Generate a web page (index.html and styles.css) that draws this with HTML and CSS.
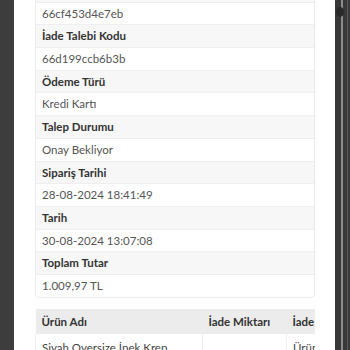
FILE: index.html
```html
<!DOCTYPE html>
<html lang="tr">
<head>
  <meta charset="UTF-8">
  <title>İade Talebi Detayı</title>
  <link rel="stylesheet" href="styles.css">
</head>
<body>

  <div class="screen">
    <div class="side-left"></div>

    <div class="modal">
      <div class="modal-body">
        <table class="detail-table">
          <tr class="label-row"><td>Sipariş Kodu</td></tr>
          <tr><td>66cf453d4e7eb</td></tr>
          <tr class="label-row"><td>İade Talebi Kodu</td></tr>
          <tr><td>66d199ccb6b3b</td></tr>
          <tr class="label-row"><td>Ödeme Türü</td></tr>
          <tr><td>Kredi Kartı</td></tr>
          <tr class="label-row"><td>Talep Durumu</td></tr>
          <tr><td>Onay Bekliyor</td></tr>
          <tr class="label-row"><td>Sipariş Tarihi</td></tr>
          <tr><td>28-08-2024 18:41:49</td></tr>
          <tr class="label-row"><td>Tarih</td></tr>
          <tr><td>30-08-2024 13:07:08</td></tr>
          <tr class="label-row"><td>Toplam Tutar</td></tr>
          <tr><td>1.009,97 TL</td></tr>
        </table>

        <div class="product-wrap">
          <table class="product-table">
            <thead>
              <tr>
                <th class="col-name">Ürün Adı</th>
                <th class="col-qty">İade Miktarı</th>
                <th class="col-reason">İade Nedeni</th>
              </tr>
            </thead>
            <tbody>
              <tr>
                <td>Siyah Oversize İpek Krep Gömlek</td>
                <td class="qty-cell">1</td>
                <td>Ürün kusurlu</td>
              </tr>
            </tbody>
          </table>
        </div>
      </div>
    </div>

    <div class="side-right">
      <span class="close-dot"></span>
      <span class="scroll-line"></span>
      <span class="edge-line"></span>
    </div>
  </div>

</body>
</html>
```

FILE: styles.css
```css
* {
  box-sizing: border-box;
  margin: 0;
  padding: 0;
}

body {
  font-family: Lato, 'Noto Sans', sans-serif;
  background: #3b3b3b;
  width: 350px;
  height: 350px;
  overflow: hidden;
}

.screen {
  display: flex;
  height: 350px;
}

.side-left {
  width: 14px;
  background: #3d3d3d;
}

.modal {
  width: 321px;
  background: #fff;
  overflow: hidden;
}

.modal-body {
  padding: 0 20px 0 21px;
  margin-top: -21.1px;
}

.detail-table {
  width: 100%;
  border-collapse: separate;
  border-spacing: 0;
  border: 1px solid #ececec;
  border-radius: 4px;
  font-size: 11.5px;
  color: #555;
}

.detail-table td {
  padding: 4px 6px;
  line-height: 13.7px;
  border-top: 1px solid #efefef;
}

.detail-table tr:first-child td {
  border-top: none;
}

.label-row td {
  background: #f7f7f7;
  font-weight: 700;
  color: #333;
}

.product-wrap {
  margin-top: 11px;
  overflow: hidden;
}

.product-table {
  width: 380px;
  border-collapse: collapse;
  font-size: 11.5px;
  color: #444;
}

.product-table th {
  background: #ececec;
  text-align: left;
  font-weight: 700;
  color: #333;
  padding: 6px 6px;
  line-height: 13px;
}

.product-table td {
  padding: 7px 6px;
  line-height: 14px;
  border: 1px solid #eee;
  border-top: none;
  vertical-align: top;
}

.product-table td.qty-cell {
  vertical-align: middle;
  padding-top: 40px;
}

.col-name {
  width: 167px;
}

.col-qty {
  width: 84px;
}

.side-right {
  flex: 1;
  display: flex;
  background: #383838;
  position: relative;
}

.close-dot {
  position: absolute;
  left: 1px;
  top: 7px;
  width: 8px;
  height: 10px;
  border-radius: 50%;
  background: #2a2a2a;
}

.scroll-line {
  margin-left: 6px;
  width: 2px;
  background: #8c8c8c;
}

.edge-line {
  margin-left: 4px;
  width: 1px;
  background: #5a5a5a;
}
```
